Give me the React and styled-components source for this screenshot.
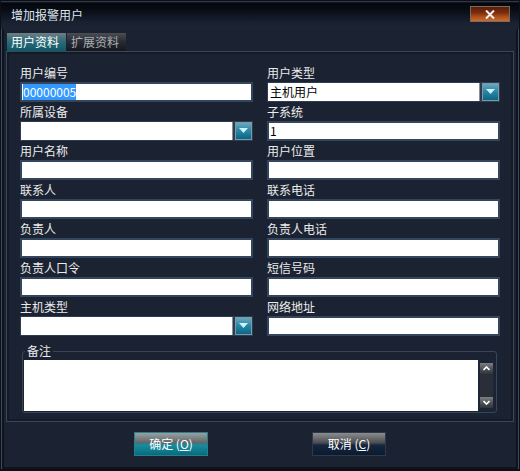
import React from "react";
import styled, { createGlobalStyle } from "styled-components";

const GlobalStyle = createGlobalStyle`
    html, body {
        margin: 0;
        padding: 0;
        background: #1b2333;
    }
    body {
        font-family: "Noto Sans CJK SC", "DejaVu Sans", sans-serif;
        font-size: 12px;
    }
`;

const Window = styled.div`
    width: 520px;
    height: 471px;
    box-sizing: border-box;
    display: flex;
    flex-direction: column;
    background: #1b2333;
    border: 1px solid #0b0f17;
    box-shadow: inset 0 0 0 1px #3f4a5e, inset 0 0 0 3px #0e131d;
    overflow: hidden;
`;

const TitleBar = styled.div`
    height: 28px;
    flex: none;
    display: flex;
    align-items: center;
    justify-content: space-between;
    padding: 0 9px 0 10px;
    background: linear-gradient(to bottom, #3d4556 0px, #04070d 2px, #070b13 8px, #1a2232 22px, #1d2535 28px);
    color: #dde4ec;
    line-height: 14px;
`;

const CloseButton = styled.div`
    width: 40px;
    height: 16px;
    box-sizing: border-box;
    margin-top: -2px;
    border: 1px solid #7b6a62;
    background: linear-gradient(to bottom, #5a1c08 0%, #7a2c0e 40%, #b4541c 75%, #c86c2c 100%);
    display: flex;
    align-items: center;
    justify-content: center;
`;

const TabRow = styled.div`
    display: flex;
    padding: 4px 0 0 6px;
    height: 18px;
    flex: none;
`;

const Tab = styled.div`
    width: 59px;
    height: 18px;
    box-sizing: border-box;
    padding-left: 4px;
    line-height: 18px;
    color: ${p => (p.$active ? "#ffffff" : "#a9aeb4")};
    background: ${p =>
        p.$active
            ? "linear-gradient(to bottom, #6e7e84 0%, #2e6c78 45%, #0c5a68 100%)"
            : "linear-gradient(to bottom, #4a4e54 0%, #272b31 50%, #14181e 100%)"};
    margin-right: 1px;
`;

const Panel = styled.div`
    margin: 0 5px;
    height: 371px;
    box-sizing: border-box;
    border: 1px solid #3a475b;
    box-shadow: inset 0 0 0 2px #141a26;
    padding: 11px 13px 0 13px;
    flex: none;
`;

const FieldGrid = styled.div`
    display: grid;
    grid-template-columns: 233px 233px;
    column-gap: 14px;
`;

const Field = styled.div`
    display: flex;
    flex-direction: column;
`;

const Label = styled.div`
    height: 19px;
    line-height: 19px;
    color: #ebebeb;
    white-space: nowrap;
`;

const TextBox = styled.div`
    height: 20px;
    box-sizing: border-box;
    border: 2px solid #34465e;
    background: #ffffff;
    color: #000000;
    line-height: 16px;
    padding-left: 1px;
    white-space: nowrap;
    overflow: hidden;
`;

const Selected = styled.span`
    background: #3399ff;
    color: #ffffff;
`;

const Combo = styled.div`
    height: 20px;
    box-sizing: border-box;
    display: flex;
    border: 1px solid #2c3c52;
    background: #2c3c52;
`;

const ComboText = styled.div`
    flex: 1;
    background: #ffffff;
    border-right: 1px solid #8a8f96;
    color: #000000;
    line-height: 18px;
    padding-left: 2px;
    margin-right: 2px;
    white-space: nowrap;
`;

const ComboButton = styled.div`
    width: 17px;
    box-sizing: border-box;
    border: 1px solid #7d99a8;
    background: linear-gradient(to bottom, #6aa8bc 0%, #2c88a6 45%, #0b6686 100%);
    display: flex;
    align-items: center;
    justify-content: center;
`;

const Group = styled.fieldset`
    margin: 8px 3px 0 2px;
    padding: 2px 1px 1px 1px;
    border: 1px solid #38465c;
    border-radius: 3px;
    min-inline-size: 0;
    height: 69px;
    box-sizing: border-box;
`;

const Legend = styled.legend`
    color: #ebebeb;
    line-height: 14px;
    padding: 0 2px;
    margin-left: 1px;
`;

const MemoRow = styled.div`
    display: flex;
    height: 51px;
`;

const Memo = styled.div`
    flex: 1;
    background: #ffffff;
`;

const ScrollBar = styled.div`
    width: 17px;
    background: #1c2536;
    display: flex;
    flex-direction: column;
    align-items: center;
    padding: 3px 0;
    box-sizing: border-box;
`;

const ScrollButton = styled.div`
    width: 13px;
    height: 11px;
    background: linear-gradient(to bottom, #7c8084 0%, #4a4e54 60%, #30343a 100%);
    display: flex;
    align-items: center;
    justify-content: center;
    flex: none;
`;

const ScrollTrack = styled.div`
    flex: 1;
    width: 13px;
    background: #2a2e38;
`;

const Footer = styled.div`
    flex: 1;
    display: flex;
    justify-content: center;
    align-items: flex-start;
    gap: 104px;
    padding-top: 10px;
    box-sizing: border-box;
    border-bottom: 1px solid #0b0f17;
`;

const Button = styled.div`
    width: 74px;
    height: 24px;
    box-sizing: border-box;
    border: 1px solid ${p => (p.$primary ? "#24808e" : "#2c3a4c")};
    background: ${p =>
        p.$primary
            ? "linear-gradient(to bottom, #9aa0a2 0%, #5e6668 45%, #148ea0 55%, #0a6a7c 100%)"
            : "linear-gradient(to bottom, #8a8c8e 0%, #4a4c50 45%, #14263e 55%, #0c1a30 100%)"};
    color: #ffffff;
    text-align: center;
    line-height: 22px;
    white-space: nowrap;
`;

const Arrow = () => (
    <svg width="9" height="6" viewBox="0 0 9 6">
        <path d="M0 0 H9 L4.5 5 Z" fill="#c8f4ff" />
    </svg>
);

const Chevron = ({ up }) => (
    <svg width="7" height="5" viewBox="0 0 7 5">
        <polyline
            points={up ? "0.5,4 3.5,1 6.5,4" : "0.5,1 3.5,4 6.5,1"}
            fill="none"
            stroke="#ffffff"
            strokeWidth="1.6"
        />
    </svg>
);

const fields = [
    { label: "用户编号", value: "00000005", selected: true },
    { label: "用户类型", value: "主机用户", combo: true },
    { label: "所属设备", combo: true },
    { label: "子系统", value: "1" },
    { label: "用户名称" },
    { label: "用户位置" },
    { label: "联系人" },
    { label: "联系电话" },
    { label: "负责人" },
    { label: "负责人电话" },
    { label: "负责人口令" },
    { label: "短信号码" },
    { label: "主机类型", combo: true },
    { label: "网络地址" },
];

function Input({ field }) {
    if (field.combo) {
        return (
            <Combo>
                <ComboText>{field.value}</ComboText>
                <ComboButton>
                    <Arrow />
                </ComboButton>
            </Combo>
        );
    }
    return (
        <TextBox>
            {field.selected ? <Selected>{field.value}</Selected> : field.value}
        </TextBox>
    );
}

export default function App() {
    return (
        <Window>
            <GlobalStyle />
            <TitleBar>
                <span>增加报警用户</span>
                <CloseButton>
                    <svg width="10" height="9" viewBox="0 0 10 9">
                        <path d="M1 0.5 L9 8.5 M9 0.5 L1 8.5" stroke="#f2f2f2" strokeWidth="2" />
                    </svg>
                </CloseButton>
            </TitleBar>
            <TabRow>
                <Tab $active>用户资料</Tab>
                <Tab>扩展资料</Tab>
            </TabRow>
            <Panel>
                <FieldGrid>
                    {fields.map(f => (
                        <Field key={f.label}>
                            <Label>{f.label}</Label>
                            <Input field={f} />
                        </Field>
                    ))}
                </FieldGrid>
                <Group>
                    <Legend>备注</Legend>
                    <MemoRow>
                        <Memo />
                        <ScrollBar>
                            <ScrollButton>
                                <Chevron up />
                            </ScrollButton>
                            <ScrollTrack />
                            <ScrollButton>
                                <Chevron />
                            </ScrollButton>
                        </ScrollBar>
                    </MemoRow>
                </Group>
            </Panel>
            <Footer>
                <Button $primary>
                    确定 (<u>O</u>)
                </Button>
                <Button>
                    取消 (<u>C</u>)
                </Button>
            </Footer>
        </Window>
    );
}
